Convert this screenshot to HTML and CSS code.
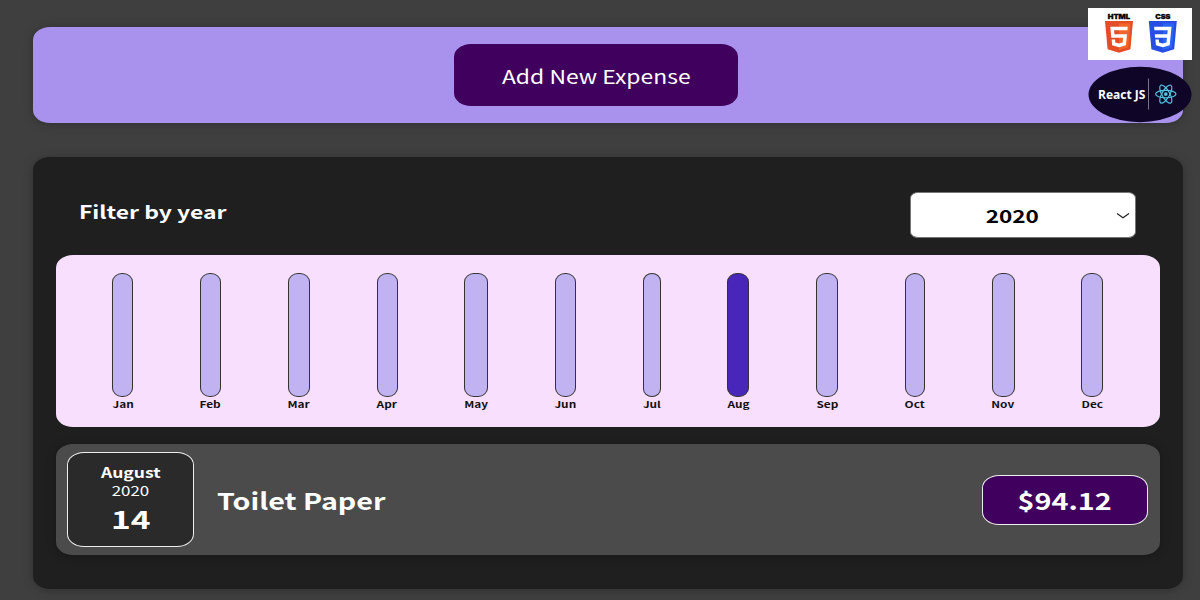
FILE: index.html
```html
<!DOCTYPE html>
<html lang="en">
<head>
<meta charset="utf-8">
<title>Expense Tracker</title>
<link rel="stylesheet" href="styles.css">
</head>
<body>
<main class="app">
  <section class="new-expense">
    <button class="add-button"><span class="wide">Add New Expense</span></button>
  </section>
  <section class="expenses">
    <div class="filter">
      <span class="filter-label wide">Filter by year</span>
      <div class="year-select">
        <span class="wide">2020</span>
        <svg class="chevron" viewBox="0 0 14 8"><path d="M1 1.5 7 5.7 13 1.5" fill="none" stroke="#222" stroke-width="1.2"/></svg>
      </div>
    </div>
    <div class="chart">
      <div class="month" style="width:21px"><div class="bar"></div><span class="wide">Jan</span></div>
      <div class="month" style="width:21px"><div class="bar"></div><span class="wide">Feb</span></div>
      <div class="month" style="width:22px"><div class="bar"></div><span class="wide">Mar</span></div>
      <div class="month" style="width:21px"><div class="bar"></div><span class="wide">Apr</span></div>
      <div class="month" style="width:24px"><div class="bar"></div><span class="wide">May</span></div>
      <div class="month" style="width:21px"><div class="bar"></div><span class="wide">Jun</span></div>
      <div class="month" style="width:18px"><div class="bar"></div><span class="wide">Jul</span></div>
      <div class="month" style="width:22px"><div class="bar full"></div><span class="wide">Aug</span></div>
      <div class="month" style="width:22px"><div class="bar"></div><span class="wide">Sep</span></div>
      <div class="month" style="width:20px"><div class="bar"></div><span class="wide">Oct</span></div>
      <div class="month" style="width:23px"><div class="bar"></div><span class="wide">Nov</span></div>
      <div class="month" style="width:22px"><div class="bar"></div><span class="wide">Dec</span></div>
    </div>
    <article class="expense">
      <div class="date">
        <span class="date-month wide">August</span>
        <span class="date-year wide">2020</span>
        <span class="date-day wide">14</span>
      </div>
      <h2 class="title wide">Toilet Paper</h2>
      <div class="price"><span class="wide">$94.12</span></div>
    </article>
  </section>
</main>
<aside class="badges">
  <svg class="html-css" viewBox="0 0 104 52">
    <rect width="104" height="52" fill="#fff"/>
    <g class="logo-text">
      <text x="19.7" y="11" textLength="22.5" lengthAdjust="spacingAndGlyphs">HTML</text>
      <text x="67.2" y="11" textLength="15.2" lengthAdjust="spacingAndGlyphs">CSS</text>
    </g>
    <path d="M17 13H45L42.4 41.3 31 44.7 19.6 41.3Z" fill="#e44d26"/>
    <path d="M31 15.3H42.5L40.2 39.5 31 42.3Z" fill="#f16529"/>
    <path d="M22.3 18.7H39.7L39.4 22.2H26.1L26.4 26.3H39L37.9 37.2 31 39.2 24.1 37.2 23.7 31.6H27.1L27.3 34.4 31 35.5 34.7 34.4 35.1 29.8H23.3Z" fill="#fff"/>
    <path d="M60.8 13H88.8L86.2 41.3 74.8 44.7 63.4 41.3Z" fill="#264de4"/>
    <path d="M74.8 15.3H86.3L84 39.5 74.8 42.3Z" fill="#2965f1"/>
    <path d="M66.1 18.7H83.5L81.7 37.2 74.8 39.2 67.9 37.2 67.4 31.6H70.8L71.1 34.4 74.8 35.5 78.5 34.4 78.9 29.8H67.1L66.8 26.3H79.3L79.7 22.2H66.4Z" fill="#fff"/>
  </svg>
  <svg class="react" viewBox="0 0 104 56">
    <ellipse cx="52" cy="28" rx="51.5" ry="27.7" fill="#0e0527"/>
    <text class="react-text" x="10" y="32" textLength="47.5" lengthAdjust="spacingAndGlyphs">React JS</text>
    <path d="M60.5 12V43" stroke="#777589" stroke-width="1"/>
    <g fill="none" stroke="#53c1de" stroke-width="1.2" transform="translate(77.8 27.6)">
      <ellipse rx="10.2" ry="3.8"/>
      <ellipse rx="10.2" ry="3.8" transform="rotate(60)"/>
      <ellipse rx="10.2" ry="3.8" transform="rotate(120)"/>
      <circle r="1.9" fill="#53c1de" stroke="none"/>
    </g>
  </svg>
</aside>
</body>
</html>
```
FILE: styles.css
```css
* { box-sizing: border-box; }
body {
  margin: 0;
  height: 600px;
  overflow: hidden;
  background: #3f3f3f;
  color: #fff;
  font-family: "Noto Sans CJK JP", "Noto Sans", sans-serif;
}
.app {
  display: flex;
  flex-direction: column;
  gap: 34px;
  padding: 27.4px 17.5px 0 33px;
}
.wide {
  display: inline-block;
  white-space: nowrap;
  transform: scaleX(1.25);
}
.new-expense {
  height: 96px;
  padding: 17px 23.5px 0 0;
  text-align: center;
  background: #a892ee;
  border-radius: 17px / 13px;
  box-shadow: 0 1px 10px rgba(0, 0, 0, .25);
}
.add-button {
  width: 284px;
  height: 62px;
  padding: 1px 0 0;
  border: 0;
  border-radius: 17px / 13px;
  background: #40005d;
  color: #fff;
  font: 400 19px/28px "Noto Sans CJK JP", sans-serif;
}
.add-button .wide { transform: scaleX(1.205); }
.expenses {
  height: 432px;
  padding: 35px 23px 0;
  background: #1f1f1f;
  border-radius: 17px / 13px;
  box-shadow: 0 1px 10px rgba(0, 0, 0, .25);
}
.filter {
  display: flex;
  justify-content: space-between;
  height: 63px;
  padding: 0 23.5px 0 23px;
}
.filter-label {
  transform: scaleX(1.27);
  transform-origin: left;
  font-size: 18px;
  font-weight: 700;
  line-height: 38px;
}
.year-select {
  display: flex;
  align-items: center;
  justify-content: center;
  position: relative;
  width: 226.5px;
  height: 46px;
  padding-right: 21px;
  border: 1px solid #777;
  border-radius: 8px / 6px;
  background: #fff;
  color: #000;
  font-size: 18px;
  font-weight: 700;
}
.chevron {
  position: absolute;
  right: 5.5px;
  top: 18.5px;
  width: 14px;
  height: 8px;
}
.chart {
  display: flex;
  justify-content: space-between;
  height: 172px;
  padding: 17.3px 56px 0 56.3px;
  border-radius: 17px / 13px;
  background: #f8dffe;
}
.month {
  display: flex;
  flex-direction: column;
  align-items: center;
  color: #111;
  font-size: 9px;
  font-weight: 700;
  line-height: 15px;
}
.month .wide { transform: scaleX(1.31); }
.bar {
  width: 100%;
  height: 124px;
  flex: none;
  border: 1px solid #333;
  border-radius: 10px / 9px;
  background: #c1b3f2;
}
.bar.full { background: #4826b9; }
.expense {
  display: flex;
  align-items: center;
  height: 111px;
  margin-top: 17px;
  padding: 0 11.5px 0 11px;
  border-radius: 17px / 13px;
  background: #4b4b4b;
  box-shadow: 0 1px 10px rgba(0, 0, 0, .25);
}
.date {
  display: flex;
  flex-direction: column;
  align-items: center;
  width: 127px;
  height: 95px;
  padding-top: 9px;
  border: 1px solid #eee;
  border-radius: 17px / 13px;
  background: #2a2a2a;
}
.date-month { font-size: 14px; font-weight: 700; line-height: 20px; }
.date-year { font-size: 13px; line-height: 18px; transform: scaleX(1.3); }
.date-day { font-size: 25px; font-weight: 700; line-height: 37px; transform: scaleX(1.34); }
.title {
  flex: 1;
  margin: 0 0 0 22.5px;
  transform: scaleX(1.245);
  transform-origin: left;
  font-size: 23px;
  font-weight: 700;
  line-height: 34px;
}
.price {
  display: flex;
  align-items: center;
  justify-content: center;
  width: 166px;
  height: 50px;
  border: 1px solid #eee;
  border-radius: 17px / 13px;
  background: #40005d;
  font-size: 23px;
  font-weight: 700;
}
.badges {
  position: absolute;
  top: 8px;
  right: 8px;
  display: flex;
  flex-direction: column;
  gap: 6px;
}
.html-css { width: 104px; height: 52px; }
.react { width: 104px; height: 57px; }
.logo-text {
  font: 900 6.6px Inter, sans-serif;
  fill: #000;
  stroke: #000;
  stroke-width: .3px;
}
.react-text { font: 700 13px "Open Sans", sans-serif; fill: #fff; }
```
